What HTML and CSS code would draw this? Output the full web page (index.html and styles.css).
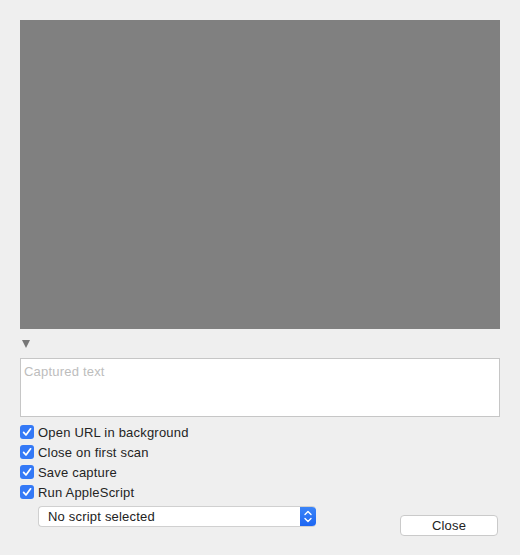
FILE: index.html
```html
<!DOCTYPE html>
<html lang="en">
<head>
    <meta charset="UTF-8">
    <title>Scan</title>
    <link rel="stylesheet" href="styles.css">
</head>
<body>
    <div class="window">
        <div class="preview"></div>
        <div class="disclosure"><span class="triangle"></span></div>
        <textarea class="captured" placeholder="Captured text"></textarea>

        <div class="options">
            <label class="option"><span class="check"><svg viewBox="0 0 14 14" width="14" height="14"><path d="M3.6 7.4 L6 10 L10.6 3.8" fill="none" stroke="#fff" stroke-width="1.7" stroke-linecap="round" stroke-linejoin="round"/></svg></span>Open URL in background</label>
            <label class="option"><span class="check"><svg viewBox="0 0 14 14" width="14" height="14"><path d="M3.6 7.4 L6 10 L10.6 3.8" fill="none" stroke="#fff" stroke-width="1.7" stroke-linecap="round" stroke-linejoin="round"/></svg></span>Close on first scan</label>
            <label class="option"><span class="check"><svg viewBox="0 0 14 14" width="14" height="14"><path d="M3.6 7.4 L6 10 L10.6 3.8" fill="none" stroke="#fff" stroke-width="1.7" stroke-linecap="round" stroke-linejoin="round"/></svg></span>Save capture</label>
            <label class="option"><span class="check"><svg viewBox="0 0 14 14" width="14" height="14"><path d="M3.6 7.4 L6 10 L10.6 3.8" fill="none" stroke="#fff" stroke-width="1.7" stroke-linecap="round" stroke-linejoin="round"/></svg></span>Run AppleScript</label>
        </div>

        <div class="footer">
            <div class="popup">
                <span class="popup-label">No script selected</span>
                <span class="stepper"><svg viewBox="0 0 16 21" width="16" height="21"><path d="M5 8.5 L8 5.5 L11 8.5 M5 12.5 L8 15.5 L11 12.5" fill="none" stroke="#fff" stroke-width="1.4" stroke-linecap="round" stroke-linejoin="round"/></svg></span>
            </div>
            <button class="btn">Close</button>
        </div>
    </div>
</body>
</html>
```

FILE: styles.css
```css
body {
    margin: 0;
    padding: 0;
    background: #efefef;
    font-family: "Liberation Sans", Arial, sans-serif;
    font-size: 13px;
    color: #222;
}
.window {
    padding: 20px 20px 0 20px;
}
.preview {
    height: 309px;
    background: #808080;
}
.disclosure {
    height: 29px;
    padding-left: 2px;
    padding-top: 11px;
    box-sizing: border-box;
}
.triangle {
    display: block;
    width: 0;
    height: 0;
    border-left: 4.5px solid transparent;
    border-right: 4.5px solid transparent;
    border-top: 8px solid #777;
}
.captured {
    display: block;
    width: 100%;
    height: 59px;
    box-sizing: border-box;
    margin: 0;
    padding: 5px 3px;
    border: 1px solid #c6c6c6;
    background: white;
    resize: none;
    font-family: "Liberation Sans", Arial, sans-serif;
    font-size: 13px;
    letter-spacing: 0.2px;
}
.captured::placeholder {
    color: #bdbdbd;
}
.options {
    margin-top: 5px;
}
.option {
    display: flex;
    align-items: center;
    height: 20px;
    color: #242424;
    letter-spacing: 0.2px;
}
.check {
    width: 14px;
    height: 14px;
    border-radius: 3px;
    background: #3479f6;
    margin-right: 4px;
    display: flex;
}
.footer {
    display: flex;
    justify-content: space-between;
    align-items: flex-start;
    margin-top: 4px;
}
.popup {
    display: flex;
    margin-left: 18px;
    width: 278px;
    height: 21px;
    box-sizing: border-box;
    background: white;
    border: 1px solid #d0d0d0;
    border-right: none;
    border-radius: 4px;
    overflow: hidden;
}
.popup-label {
    flex: 1;
    line-height: 19px;
    padding-left: 9px;
    color: #222;
    letter-spacing: 0.2px;
}
.stepper {
    width: 16px;
    height: 21px;
    margin-top: -1px;
    background: linear-gradient(#3d86f8, #1b64f2);
    border-radius: 0 4px 4px 0;
}
.btn {
    margin-top: 9px;
    margin-right: 2px;
    width: 98px;
    height: 21px;
    background: white;
    border: 1px solid #cacaca;
    border-radius: 4px;
    font-family: "Liberation Sans", Arial, sans-serif;
    font-size: 13px;
    letter-spacing: 0.2px;
    color: #222;
    padding: 0;
}
```
